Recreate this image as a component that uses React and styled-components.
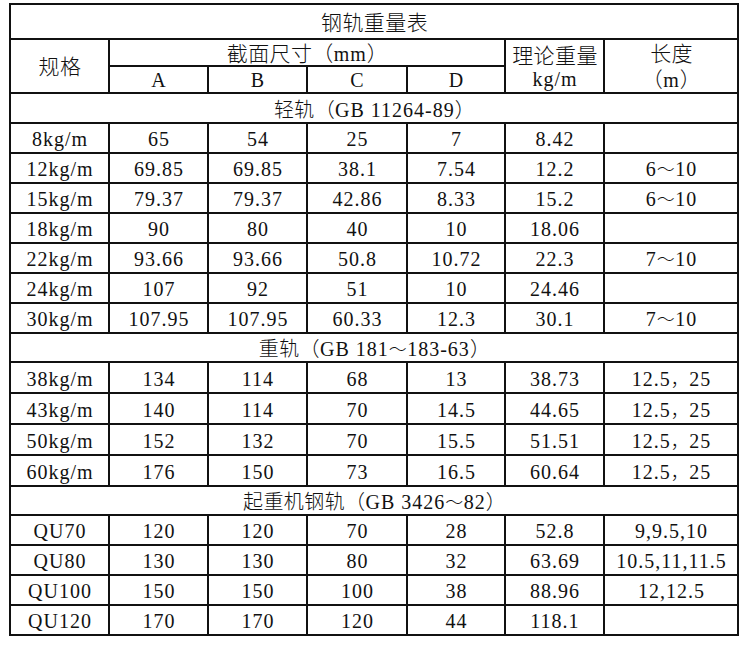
import styled, { createGlobalStyle } from "styled-components";

const GlobalStyle = createGlobalStyle`
  html, body {
    margin: 0;
    padding: 0;
    background: #ffffff;
  }
  body {
    font-family: "Liberation Serif", "Noto Sans CJK SC", serif;
    color: #111111;
  }
`;

const Page = styled.div`
  padding: 3px 0 0 9px;
  width: 750px;
  height: 645px;
  box-sizing: border-box;
  background: #ffffff;
`;

const Sheet = styled.table`
  border-collapse: collapse;
  table-layout: fixed;
  width: 730px;
  border: 2px solid #111;
`;

const Cell = styled.td`
  border: 2px solid #111;
  height: ${({ $h }) => $h || 26}px;
  padding: 2px 0 0 1px;
  text-align: center;
  vertical-align: middle;
  font-size: 20px;
  line-height: 1;
  letter-spacing: 1px;
  white-space: nowrap;
`;

const HeadCell = styled(Cell)`
  padding: 0 0 0 1px;
  line-height: ${({ $lh }) => $lh || 1};
`;

const Han = styled.span`
  font-family: "Noto Sans CJK SC", sans-serif;
  font-size: ${({ $size }) => $size || 20}px;
  font-weight: 300;
  letter-spacing: 0.4px;
`;

const columns = [99, 99, 99, 100, 98, 99, 134];

const sections = [
  {
    rowH: 26,
    title: (
      <>
        <Han>轻轨（</Han>GB 11264-89<Han>）</Han>
      </>
    ),
    rows: [
      ["8kg/m", "65", "54", "25", "7", "8.42", ""],
      ["12kg/m", "69.85", "69.85", "38.1", "7.54", "12.2", "6～10"],
      ["15kg/m", "79.37", "79.37", "42.86", "8.33", "15.2", "6～10"],
      ["18kg/m", "90", "80", "40", "10", "18.06", ""],
      ["22kg/m", "93.66", "93.66", "50.8", "10.72", "22.3", "7～10"],
      ["24kg/m", "107", "92", "51", "10", "24.46", ""],
      ["30kg/m", "107.95", "107.95", "60.33", "12.3", "30.1", "7～10"],
    ],
  },
  {
    rowH: 27,
    title: (
      <>
        <Han>重轨（</Han>GB 181<Han $size={18}>～</Han>183-63<Han>）</Han>
      </>
    ),
    rows: [
      ["38kg/m", "134", "114", "68", "13", "38.73", "12.5，25"],
      ["43kg/m", "140", "114", "70", "14.5", "44.65", "12.5，25"],
      ["50kg/m", "152", "132", "70", "15.5", "51.51", "12.5，25"],
      ["60kg/m", "176", "150", "73", "16.5", "60.64", "12.5，25"],
    ],
  },
  {
    rowH: 26,
    title: (
      <>
        <Han>起重机钢轨（</Han>GB 3426<Han $size={18}>～</Han>82<Han>）</Han>
      </>
    ),
    rows: [
      ["QU70", "120", "120", "70", "28", "52.8", "9,9.5,10"],
      ["QU80", "130", "130", "80", "32", "63.69", "10.5,11,11.5"],
      ["QU100", "150", "150", "100", "38", "88.96", "12,12.5"],
      ["QU120", "170", "170", "120", "44", "118.1", ""],
    ],
  },
];

const renderValue = (text) => {
  const mark = text.includes("～") ? "～" : text.includes("，") ? "，" : null;
  if (!mark) return text;
  const [a, b] = text.split(mark);
  return (
    <>
      {a}
      <Han $size={18}>{mark}</Han>
      {b}
    </>
  );
};

const SectionRows = ({ section, first }) => (
  <>
    <tr>
      <Cell colSpan={7} $h={first ? 26 : 25}>
        {section.title}
      </Cell>
    </tr>
    {section.rows.map((row) => (
      <tr key={row[0]}>
        {row.map((value, i) => (
          <Cell key={i} $h={section.rowH}>
            {renderValue(value)}
          </Cell>
        ))}
      </tr>
    ))}
  </>
);

const App = () => (
  <Page>
    <GlobalStyle />
    <Sheet>
      <colgroup>
        {columns.map((w, i) => (
          <col key={i} style={{ width: w }} />
        ))}
      </colgroup>
      <tbody>
        <tr>
          <HeadCell colSpan={7} $h={33}>
            <Han $size={21}>钢轨重量表</Han>
          </HeadCell>
        </tr>
        <tr>
          <HeadCell rowSpan={2}>
            <Han $size={21}>规格</Han>
          </HeadCell>
          <HeadCell colSpan={4} $h={22}>
            <Han $size={21}>截面尺寸（</Han>mm<Han $size={21}>）</Han>
          </HeadCell>
          <HeadCell rowSpan={2} $lh={1.15}>
            <Han $size={21}>理论重量</Han>
            <br />
            kg/m
          </HeadCell>
          <HeadCell rowSpan={2} $lh={1.15}>
            <Han $size={21}>长度</Han>
            <br />
            <Han $size={21}>（</Han>m<Han $size={21}>）</Han>
          </HeadCell>
        </tr>
        <tr>
          {["A", "B", "C", "D"].map((l) => (
            <HeadCell key={l} $h={22}>
              {l}
            </HeadCell>
          ))}
        </tr>
        {sections.map((s, i) => (
          <SectionRows key={i} section={s} first={i === 0} />
        ))}
      </tbody>
    </Sheet>
  </Page>
);

export default App;
